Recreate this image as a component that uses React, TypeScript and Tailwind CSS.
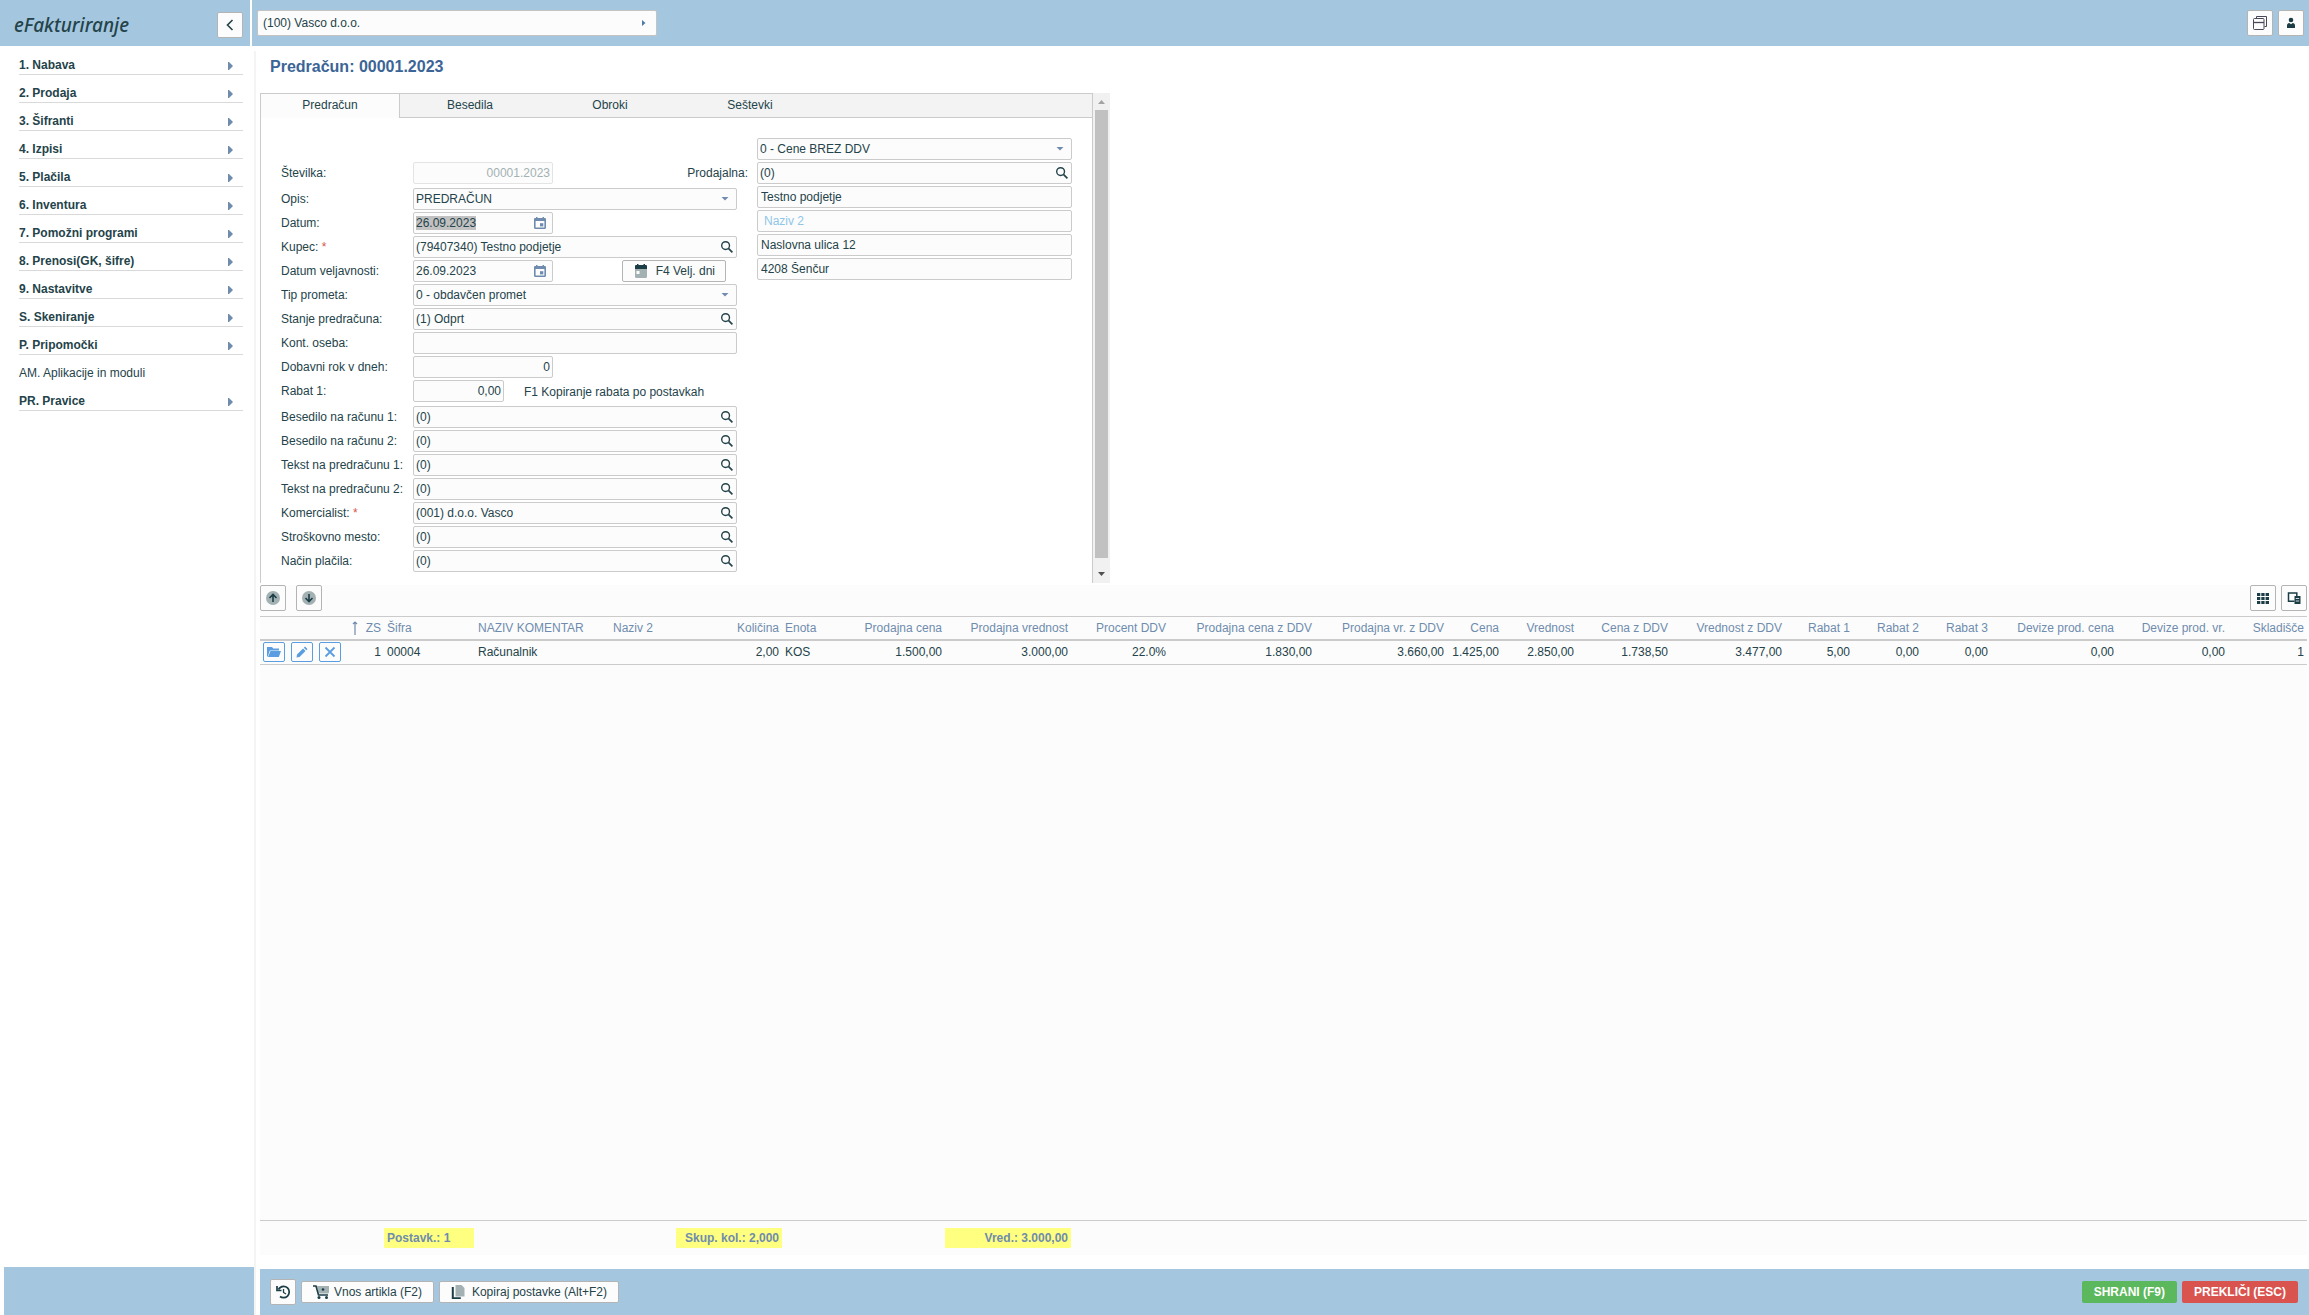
import type { ReactNode } from 'react';

const menuItems = [
  '1. Nabava',
  '2. Prodaja',
  '3. Šifranti',
  '4. Izpisi',
  '5. Plačila',
  '6. Inventura',
  '7. Pomožni programi',
  '8. Prenosi(GK, šifre)',
  '9. Nastavitve',
  'S. Skeniranje',
  'P. Pripomočki',
  'AM. Aplikacije in moduli',
  'PR. Pravice',
];

const tabs = ['Predračun', 'Besedila', 'Obroki', 'Seštevki'];

const columns = [
  { title: 'Šifra', value: '00004', col: 'w-[91px]', align: 'text-left' },
  { title: 'NAZIV KOMENTAR', value: 'Računalnik', col: 'w-[135px]', align: 'text-left' },
  { title: 'Naziv 2', value: '', col: 'w-[66px]', align: 'text-left' },
  { title: 'Količina', value: '2,00', col: 'w-[106px]', align: 'text-right' },
  { title: 'Enota', value: 'KOS', col: 'w-[48px]', align: 'text-left' },
  { title: 'Prodajna cena', value: '1.500,00', col: 'w-[115px]', align: 'text-right' },
  { title: 'Prodajna vrednost', value: '3.000,00', col: 'w-[126px]', align: 'text-right' },
  { title: 'Procent DDV', value: '22.0%', col: 'w-[98px]', align: 'text-right' },
  { title: 'Prodajna cena z DDV', value: '1.830,00', col: 'w-[146px]', align: 'text-right' },
  { title: 'Prodajna vr. z DDV', value: '3.660,00', col: 'w-[132px]', align: 'text-right' },
  { title: 'Cena', value: '1.425,00', col: 'w-[55px]', align: 'text-right' },
  { title: 'Vrednost', value: '2.850,00', col: 'w-[75px]', align: 'text-right' },
  { title: 'Cena z DDV', value: '1.738,50', col: 'w-[94px]', align: 'text-right' },
  { title: 'Vrednost z DDV', value: '3.477,00', col: 'w-[114px]', align: 'text-right' },
  { title: 'Rabat 1', value: '5,00', col: 'w-[68px]', align: 'text-right' },
  { title: 'Rabat 2', value: '0,00', col: 'w-[69px]', align: 'text-right' },
  { title: 'Rabat 3', value: '0,00', col: 'w-[69px]', align: 'text-right' },
  { title: 'Devize prod. cena', value: '0,00', col: 'w-[126px]', align: 'text-right' },
  { title: 'Devize prod. vr.', value: '0,00', col: 'w-[111px]', align: 'text-right' },
  { title: 'Skladišče', value: '1', col: 'w-[79px]', align: 'text-right' },
];

const box = 'h-[22px] rounded-xs border border-[#cbcbcb] bg-[#fcfcfc]';
const iconButton = 'flex size-[26px] items-center justify-center rounded-xs border border-[#b4b4b4] bg-[#fcfcfc]';

function Caret() {
  return (
    <svg className="pointer-events-none absolute top-[9px] right-2 h-1 w-2" viewBox="0 0 8 4" fill="#6f8cae">
      <path d="M0.500 0h7L4 3.600z" />
    </svg>
  );
}

function Row({ id, label, required, children }: { id: string; label: string; required?: boolean; children: ReactNode }) {
  return (
    <div className="flex items-center">
      <label htmlFor={id} className="w-[132px] shrink-0 whitespace-nowrap">
        {label}
        {required && <span className="text-[#d9534f]"> *</span>}
      </label>
      {children}
    </div>
  );
}

function SearchField({ id, value }: { id: string; value: string }) {
  return (
    <div className={`${box} flex flex-1 items-center pr-[3px] pl-0.5`}>
      <input id={id} defaultValue={value} className="min-w-0 flex-1 outline-none" />
      <button type="button" aria-label="Iskanje">
        <svg className="size-3" viewBox="0 0 12 12" fill="none" stroke="#24434a">
          <circle cx="4.600" cy="4.600" r="3.900" strokeWidth="1.400" />
          <path d="M7.400 7.400l4 4" strokeWidth="1.700" />
        </svg>
      </button>
    </div>
  );
}

function SelectField({ id, value, label }: { id: string; value: string; label?: string }) {
  return (
    <div className="relative flex flex-1">
      <select id={id} aria-label={label} className={`${box} w-full appearance-none px-0.5 outline-none`}>
        <option>{value}</option>
      </select>
      <Caret />
    </div>
  );
}

function DateField({ id, value, selected }: { id: string; value: string; selected?: boolean }) {
  return (
    <div className={`${box} flex w-[140px] items-center justify-between pr-1.5 pl-0.5`}>
      <input
        id={id}
        defaultValue={value}
        className={`h-3.5 leading-3.5 outline-none [field-sizing:content] ${selected ? 'bg-[#c1c1c1]' : ''}`}
      />
      <button type="button" aria-label="Koledar">
        <svg className="h-3 w-3" viewBox="0 0 12 12" fill="#6f8cae">
          <path d="M2 0h1.500v1h5V0H10v1h.8c.7 0 1.200.5 1.200 1.200v8.600c0 .7-.5 1.200-1.200 1.200H1.200C.5 12 0 11.500 0 10.800V2.200C0 1.500.5 1 1.200 1H2zM1.600 4v6.400h8.800V4z" />
          <path d="M6 6.200h3.300v3.200H6z" />
        </svg>
      </button>
    </div>
  );
}

function Topbar() {
  return (
    <header className="flex h-[46px] shrink-0 bg-[#a4c7df]">
      <div className="flex w-[252px] shrink-0 items-center justify-between border-r-2 border-white pt-1 pr-[7px] pl-3.5">
        <span className="font-['Noto_Sans','Open_Sans',sans-serif] text-[19px] leading-6 font-medium italic">
          eFakturiranje
        </span>
        <button className={iconButton} aria-label="Skrij meni">
          <svg className="h-3 w-2" viewBox="0 0 8 12" fill="none" stroke="#24434a" strokeWidth="1.600">
            <path d="M6.500 1L1.500 6l5 5" />
          </svg>
        </button>
      </div>
      <div className="flex flex-1 items-center justify-between pr-[5px] pl-[5px]">
        <button className="flex h-[26px] w-[400px] items-center justify-between rounded-xs border border-[#c4c4c4] bg-[#fcfcfc] pr-2.5 pl-[5px]">
          (100) Vasco d.o.o.
          <svg className="h-1.5 w-1" viewBox="0 0 4 6" fill="#4f7ba8">
            <path d="M0 0l3.500 3L0 6z" />
          </svg>
        </button>
        <div className="flex gap-[5px]">
          <button className={iconButton} aria-label="Okna">
            <svg className="size-4" viewBox="0 0 16 16" fill="none" stroke="#4b4658" strokeWidth="1">
              <path d="M4.500 3.500v-2h10v10h-2" />
              <rect x="1.500" y="3.500" width="10.500" height="11" rx="1" fill="#fcfcfc" />
              <path d="M1.500 7.500H12" strokeWidth="1.300" />
            </svg>
          </button>
          <button className={iconButton} aria-label="Uporabnik">
            <svg className="size-3" viewBox="0 0 12 12" fill="#1b3d46">
              <circle cx="6" cy="3" r="2.300" />
              <path d="M2 11V8.600c0-1.500 1-2.300 2.300-2.600L6 7.300 7.700 6C9 6.300 10 7.100 10 8.600V11z" />
            </svg>
          </button>
        </div>
      </div>
    </header>
  );
}

function Sidebar() {
  return (
    <aside className="flex w-[254px] shrink-0 flex-col">
      <nav className="mt-px mr-[11px] ml-[19px]">
        {menuItems.map((item) =>
          item.startsWith('AM.') ? (
            <a key={item} href="#" className="flex h-7 items-center pt-2">
              {item}
            </a>
          ) : (
            <a
              key={item}
              href="#"
              className="flex h-7 items-center justify-between border-b border-[#d9d9d9] pt-2 pr-2.5 font-bold"
            >
              {item}
              <svg className="mt-0.5 h-2 w-[5px]" viewBox="0 0 5 8" fill="#6f8cae">
                <path d="M0 0h1l4 4-4 4H0z" />
              </svg>
            </a>
          ),
        )}
      </nav>
      <div className="mt-auto ml-1 h-12 bg-[#a4c7df]" />
    </aside>
  );
}

function DocumentForm() {
  return (
    <form className="flex items-start gap-5 pr-5 pl-5">
      <div className="mt-11 flex w-[456px] flex-col gap-0.5">
        <div className="mb-0.5 flex items-center">
          <label htmlFor="stevilka" className="w-[132px]">
            Številka:
          </label>
          <input
            id="stevilka"
            disabled
            defaultValue="00001.2023"
            className="h-[22px] w-[140px] rounded-xs border border-[#e4e4e4] bg-[#fcfcfc] px-0.5 text-right text-[#a3b1b3]"
          />
          <label htmlFor="prodajalna" className="-mr-[11px] ml-auto">
            Prodajalna:
          </label>
        </div>
        <Row id="opis" label="Opis:">
          <SelectField id="opis" value="PREDRAČUN" />
        </Row>
        <Row id="datum" label="Datum:">
          <DateField id="datum" value="26.09.2023" selected />
        </Row>
        <Row id="kupec" label="Kupec:" required>
          <SearchField id="kupec" value="(79407340) Testno podjetje" />
        </Row>
        <Row id="veljavnost" label="Datum veljavnosti:">
          <DateField id="veljavnost" value="26.09.2023" />
          <button
            type="button"
            className="mr-[11px] ml-auto flex h-[22px] w-[104px] items-center justify-between rounded-xs border border-[#b4b4b4] bg-[#fcfcfc] pr-2.5 pl-3"
          >
            <svg className="h-3.5 w-3" viewBox="0 0 12 14">
              <path d="M0 5h12v7.500c0 .8-.5 1.500-1.300 1.500H1.300C.5 14 0 13.300 0 12.500z" fill="#a3b1b3" />
              <path d="M0 5V2.300C0 1.500.5 1 1.300 1H2V0h1.500v1h5V0H10v1h.7c.8 0 1.300.5 1.300 1.300V5z" fill="#1b3d46" />
              <rect x="1.500" y="7" width="3" height="3" fill="#fcfcfc" />
            </svg>
            F4 Velj. dni
          </button>
        </Row>
        <Row id="promet" label="Tip prometa:">
          <SelectField id="promet" value="0 - obdavčen promet" />
        </Row>
        <Row id="stanje" label="Stanje predračuna:">
          <SearchField id="stanje" value="(1) Odprt" />
        </Row>
        <Row id="oseba" label="Kont. oseba:">
          <input id="oseba" className={`${box} min-w-0 flex-1 px-0.5`} />
        </Row>
        <Row id="rok" label="Dobavni rok v dneh:">
          <input id="rok" defaultValue="0" className={`${box} w-[140px] px-0.5 text-right`} />
        </Row>
        <div className="mb-0.5">
          <Row id="rabat" label="Rabat 1:">
            <input id="rabat" defaultValue="0,00" className={`${box} w-[91px] px-0.5 text-right`} />
            <button type="button" className="ml-5 pt-0.5">
              F1 Kopiranje rabata po postavkah
            </button>
          </Row>
        </div>
        <Row id="besedilo1" label="Besedilo na računu 1:">
          <SearchField id="besedilo1" value="(0)" />
        </Row>
        <Row id="besedilo2" label="Besedilo na računu 2:">
          <SearchField id="besedilo2" value="(0)" />
        </Row>
        <Row id="tekst1" label="Tekst na predračunu 1:">
          <SearchField id="tekst1" value="(0)" />
        </Row>
        <Row id="tekst2" label="Tekst na predračunu 2:">
          <SearchField id="tekst2" value="(0)" />
        </Row>
        <Row id="komercialist" label="Komercialist:" required>
          <SearchField id="komercialist" value="(001) d.o.o. Vasco" />
        </Row>
        <Row id="mesto" label="Stroškovno mesto:">
          <SearchField id="mesto" value="(0)" />
        </Row>
        <Row id="placilo" label="Način plačila:">
          <SearchField id="placilo" value="(0)" />
        </Row>
      </div>
      <div className="mt-5 flex flex-1 flex-col gap-0.5">
        <div className="flex">
          <SelectField id="cene" label="Cene" value="0 - Cene BREZ DDV" />
        </div>
        <div className="flex">
          <SearchField id="prodajalna" value="(0)" />
        </div>
        <input aria-label="Naziv" defaultValue="Testno podjetje" className={`${box} px-[3px]`} />
        <input
          aria-label="Naziv 2"
          placeholder="Naziv 2"
          className={`${box} px-1.5 placeholder:font-medium placeholder:text-[#8fc6e8]`}
        />
        <input aria-label="Naslov" defaultValue="Naslovna ulica 12" className={`${box} px-[3px]`} />
        <input aria-label="Kraj" defaultValue="4208 Šenčur" className={`${box} px-[3px]`} />
      </div>
    </form>
  );
}

function DocumentPanel() {
  return (
    <section className="flex h-[490px] w-[850px]">
      <div className="flex flex-1 flex-col border-x border-[#cbcbcb]">
        <div className="flex h-[25px] shrink-0 border-t border-[#cbcbcb] bg-[#f3f3f3]" role="tablist">
          {tabs.map((tab, i) => (
            <button
              key={tab}
              role="tab"
              aria-selected={i === 0}
              className={
                i === 0
                  ? 'w-[139px] border-r border-[#cbcbcb] bg-[#fcfcfc] pb-0.5'
                  : 'w-[140px] border-b border-[#cbcbcb] pb-px'
              }
            >
              {tab}
            </button>
          ))}
          <div className="flex-1 border-b border-[#cbcbcb]" />
        </div>
        <DocumentForm />
      </div>
      <div className="flex w-[17px] flex-col items-center justify-between bg-[#f1f1f1]">
        <svg className="h-[17px] w-[7px]" viewBox="0 0 7 17" fill="#a3a3a3">
          <path d="M3.500 7L7 11H0z" />
        </svg>
        <div className="mb-2 w-[13px] flex-1 bg-[#c1c1c1]" />
        <svg className="h-[17px] w-[7px]" viewBox="0 0 7 17" fill="#505050">
          <path d="M0 6h7l-3.500 4z" />
        </svg>
      </div>
    </section>
  );
}

function RowButton({ label, children }: { label: string; children: ReactNode }) {
  return (
    <button
      aria-label={label}
      className="flex h-5 w-[22px] items-center justify-center rounded-xs border border-[#5a9de0] bg-[#fcfcfc]"
    >
      {children}
    </button>
  );
}

function Items() {
  return (
    <section className="mt-0.5 mr-0.5 flex flex-1 flex-col bg-[#fcfcfc]">
      <div className="flex justify-between">
        <div className="flex gap-2.5">
          <button className={iconButton} aria-label="Gor">
            <svg className="size-3.5" viewBox="0 0 14 14">
              <circle cx="7" cy="7" r="7" fill="#a3b1b3" />
              <path d="M7 11V4M3.500 7L7 3.500 10.500 7" fill="none" stroke="#1b3d46" strokeWidth="1.600" />
            </svg>
          </button>
          <button className={iconButton} aria-label="Dol">
            <svg className="size-3.5" viewBox="0 0 14 14">
              <circle cx="7" cy="7" r="7" fill="#a3b1b3" />
              <path d="M7 3v7M3.500 7L7 10.500 10.500 7" fill="none" stroke="#1b3d46" strokeWidth="1.600" />
            </svg>
          </button>
        </div>
        <div className="flex gap-[5px]">
          <button className={iconButton} aria-label="Stolpci">
            <svg className="size-3" viewBox="0 0 12 12" fill="#1b3d46">
              <path d="M0 1h3.300v3H0zM4.300 1h3.300v3H4.300zM8.600 1H12v3H8.600zM0 5h3.300v3H0zM4.300 5h3.300v3H4.300zM8.600 5H12v3H8.600zM0 9h3.300v3H0zM4.300 9h3.300v3H4.300zM8.600 9H12v3H8.600z" />
            </svg>
          </button>
          <button className={iconButton} aria-label="Izvoz">
            <svg className="size-3.5" viewBox="0 0 14 14">
              <path d="M7.500 10.200H1.500V2H9.800v3" fill="none" stroke="#1b3d46" strokeWidth="1.500" />
              <path d="M7.500 5H13.500V13H7.500z" fill="#1b3d46" />
              <path d="M8.800 7.500H12.200M8.800 10H12.200" stroke="#fcfcfc" strokeWidth=".8" />
            </svg>
          </button>
        </div>
      </div>
      <table className="mt-[5px] w-full table-fixed border-collapse">
        <colgroup>
          <col className="w-[85px]" />
          <col className="w-[39px]" />
          {columns.map((c) => (
            <col key={c.title} className={c.col} />
          ))}
        </colgroup>
        <thead className="text-[#6f8cae]">
          <tr className="h-[23px] border-t border-b-2 border-[#cbcbcb]">
            <th aria-label="Dejanja" />
            <th className="pr-[3px] text-right font-normal">
              <span className="flex items-center justify-end gap-2">
                <svg className="h-3.5 w-1.5 shrink-0" viewBox="0 0 6 14" fill="none" stroke="#6f8cae" strokeWidth="1.200">
                  <path d="M3 14V0.800M1 3l2-2 2 2" />
                </svg>
                ZS
              </span>
            </th>
            {columns.map((c) => (
              <th key={c.title} className={`px-[3px] font-normal whitespace-nowrap ${c.align}`}>
                {c.title}
              </th>
            ))}
          </tr>
        </thead>
        <tbody>
          <tr className="h-[25px] border-b border-[#cbcbcb]">
            <td className="pl-[3px]">
              <div className="flex gap-1.5">
                <RowButton label="Odpri">
                  <svg className="h-3 w-3.5" viewBox="0 0 14 12" fill="#5a9de0">
                    <path d="M0 10.500V1h5L6.300 2.500H12V4.500H2.800L.8 10.500z" />
                    <path d="M3.500 5H14l-2.200 6H1z" />
                  </svg>
                </RowButton>
                <RowButton label="Uredi">
                  <svg className="size-3" viewBox="0 0 12 12" fill="#5a9de0">
                    <path d="M.5 11.500l.5-3L7 2.500 9.500 5l-6 6zM7.800 1.700L9 .5 11.500 3l-1.200 1.200z" />
                  </svg>
                </RowButton>
                <RowButton label="Briši">
                  <svg className="size-3" viewBox="0 0 12 12" fill="none" stroke="#5a9de0" strokeWidth="1.800">
                    <path d="M1.500 1.500l9 9M10.500 1.500l-9 9" />
                  </svg>
                </RowButton>
              </div>
            </td>
            <td className="px-[3px] text-right">1</td>
            {columns.map((c) => (
              <td key={c.title} className={`px-[3px] whitespace-nowrap ${c.align}`}>
                {c.value}
              </td>
            ))}
          </tr>
        </tbody>
      </table>
      <div className="mt-auto flex h-[35px] border-t border-[#cbcbcb] pt-[7px] pl-[124px] leading-5 font-bold text-[#6f8cae]">
        <div className="h-5 w-[90px] bg-[#ffff80] px-[3px]">Postavk.: 1</div>
        <div className="ml-[202px] h-5 w-[106px] bg-[#ffff80] px-[3px] text-right">Skup. kol.: 2,000</div>
        <div className="ml-[163px] h-5 w-[126px] bg-[#ffff80] px-[3px] text-right">Vred.: 3.000,00</div>
      </div>
    </section>
  );
}

function Footer() {
  const action = 'flex h-[22px] items-center justify-between rounded-xs border border-[#b4b4b4] bg-[#fcfcfc]';
  return (
    <footer className="mt-3.5 flex h-[46px] items-center gap-[5px] bg-[#a4c7df] pr-[11px] pl-2.5">
      <button className={iconButton} aria-label="Zgodovina">
        <svg className="size-3.5" viewBox="0 0 14 14" fill="none" stroke="#1b3d46" strokeWidth="1.700">
          <path d="M2.500 4.500C3.600 2.400 5.300 1.300 7.500 1.300a5.700 5.700 0 010 11.400c-1.300 0-2.500-.4-3.500-1.200" />
          <path d="M1 1v4.500h4.500" />
          <path d="M7.500 4v3.500L10 9" strokeWidth="1.300" />
        </svg>
      </button>
      <button className={`${action} w-[133px] px-[11px]`}>
        <svg className="h-3.5 w-4" viewBox="0 0 16 14">
          <path d="M4 1h12v6.500l-1 1H5.500z" fill="#a3b1b3" />
          <path d="M0 1h3l2.500 9H15" fill="none" stroke="#1b3d46" strokeWidth="1.600" />
          <circle cx="6" cy="12.500" r="1.500" fill="#1b3d46" />
          <circle cx="13.500" cy="12.500" r="1.500" fill="#1b3d46" />
          <circle cx="10" cy="4.500" r="1.300" fill="#1b3d46" />
        </svg>
        Vnos artikla (F2)
      </button>
      <button className={`${action} w-[180px] px-[11px]`}>
        <svg className="h-3.5 w-3.5" viewBox="0 0 14 14">
          <path d="M4.500 0h6L13.500 3v8.500h-9z" fill="#a3b1b3" />
          <path d="M1.800 2v11.200h8" fill="none" stroke="#1b3d46" strokeWidth="2" />
        </svg>
        Kopiraj postavke (Alt+F2)
      </button>
      <button className="ml-auto h-[22px] rounded-xs bg-[#5cb85c] px-3 font-bold text-white">SHRANI (F9)</button>
      <button className="h-[22px] rounded-xs bg-[#d9534f] px-3 font-bold text-white">PREKLIČI (ESC)</button>
    </footer>
  );
}

export default function App() {
  return (
    <div className="flex min-h-screen flex-col bg-white font-['Liberation_Sans',Arial,sans-serif] text-[12px] leading-4 text-[#24434a]">
      <Topbar />
      <div className="flex flex-1">
        <Sidebar />
        <main className="mt-[5px] flex min-w-0 flex-1 flex-col border-l-2 border-[#f4f4f4] pl-1">
          <h1 className="mt-1.5 mb-4 pl-2.5 text-[16px] leading-5 font-bold text-[#3b6596]">Predračun: 00001.2023</h1>
          <DocumentPanel />
          <Items />
          <Footer />
        </main>
      </div>
    </div>
  );
}
